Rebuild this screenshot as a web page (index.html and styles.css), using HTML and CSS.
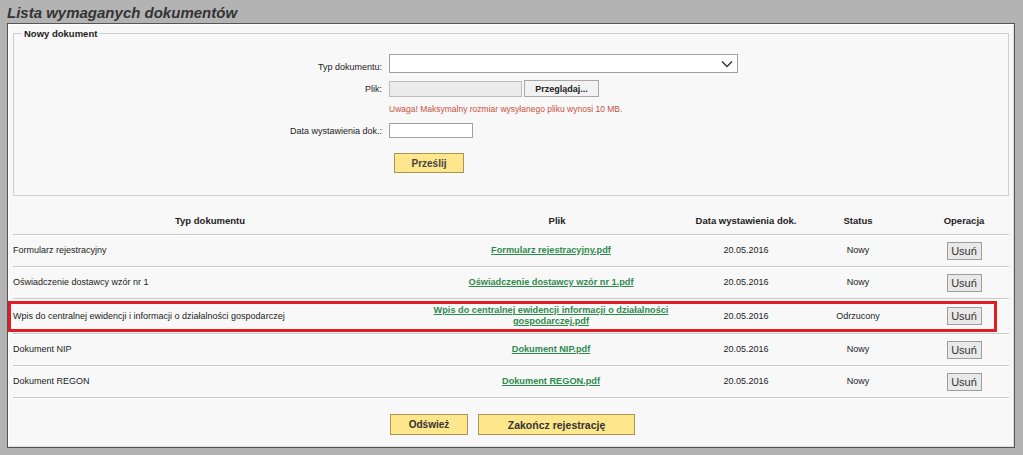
FILE: index.html
```html
<!DOCTYPE html>
<html lang="pl">
<head>
<meta charset="utf-8">
<title>Lista wymaganych dokumentów</title>
<link rel="stylesheet" href="styles.css">
</head>
<body>
<div class="page">
  <h1 class="title">Lista wymaganych dokumentów</h1>
  <div class="panel">
    <fieldset class="new-doc">
      <legend>Nowy dokument</legend>
      <div class="form-grid">
        <label class="lbl">Typ dokumentu:</label>
        <div class="select">
          <svg class="chev" width="12" height="8" viewBox="0 0 12 8"><path d="M1 1.5 L6 6.5 L11 1.5" fill="none" stroke="#333" stroke-width="1.4"/></svg>
        </div>

        <label class="lbl">Plik:</label>
        <div class="file">
          <span class="file-box"></span>
          <button class="btn-gray">Przeglądaj...</button>
        </div>

        <span></span>
        <div class="warn">Uwaga! Maksymalny rozmiar wysyłanego pliku wynosi 10 MB.</div>

        <label class="lbl">Data wystawienia dok.:</label>
        <div><span class="date-input"></span></div>

        <span></span>
        <div class="submit-row"><button class="btn-yellow btn-send">Prześlij</button></div>
      </div>
    </fieldset>

    <div class="docs">
      <div class="row head">
        <div class="c">Typ dokumentu</div>
        <div class="c">Plik</div>
        <div class="c">Data wystawienia dok.</div>
        <div class="c">Status</div>
        <div class="c">Operacja</div>
      </div>
      <div class="row">
        <div class="c name">Formularz rejestracyjny</div>
        <div class="c file-c"><a href="#">Formularz rejestracyjny.pdf</a></div>
        <div class="c">20.05.2016</div>
        <div class="c">Nowy</div>
        <div class="c"><button class="btn-del">Usuń</button></div>
      </div>
      <div class="row">
        <div class="c name">Oświadczenie dostawcy wzór nr 1</div>
        <div class="c file-c"><a href="#">Oświadczenie dostawcy wzór nr 1.pdf</a></div>
        <div class="c">20.05.2016</div>
        <div class="c">Nowy</div>
        <div class="c"><button class="btn-del">Usuń</button></div>
      </div>
      <div class="row marked">
        <div class="c name">Wpis do centralnej ewidencji i informacji o działalności gospodarczej</div>
        <div class="c file-c wrap"><a href="#">Wpis do centralnej ewidencji informacji o działalności gospodarczej.pdf</a></div>
        <div class="c">20.05.2016</div>
        <div class="c">Odrzucony</div>
        <div class="c"><button class="btn-del">Usuń</button></div>
      </div>
      <div class="row">
        <div class="c name">Dokument NIP</div>
        <div class="c file-c"><a href="#">Dokument NIP.pdf</a></div>
        <div class="c">20.05.2016</div>
        <div class="c">Nowy</div>
        <div class="c"><button class="btn-del">Usuń</button></div>
      </div>
      <div class="row">
        <div class="c name">Dokument REGON</div>
        <div class="c file-c"><a href="#">Dokument REGON.pdf</a></div>
        <div class="c">20.05.2016</div>
        <div class="c">Nowy</div>
        <div class="c"><button class="btn-del">Usuń</button></div>
      </div>
    </div>

    <div class="actions">
      <button class="btn-yellow btn-refresh">Odśwież</button>
      <button class="btn-yellow btn-finish">Zakończ rejestrację</button>
    </div>
  </div>
</div>
</body>
</html>
```
FILE: styles.css
```css
* { box-sizing: border-box; }

html, body {
  margin: 0;
  padding: 0;
  background: #b3b3b3;
  font-family: "Liberation Sans", Arial, sans-serif;
  font-size: 9px;
  color: #222;
}

.page {
  padding: 4px 8px 7px 7px;
}

.title {
  margin: 0 0 1px 0;
  font-size: 15px;
  line-height: 18px;
  font-weight: bold;
  font-style: italic;
  color: #333;
}

.panel {
  background: #f8f8f8;
  border: 1px solid #555;
  box-shadow: inset 1px 1px 0 #fff, inset -1px -1px 0 #ddd;
  height: 425px;
  padding: 4px 5px 0 5px;
}

.new-doc {
  margin: 0;
  border: 1px solid #cfcfcf;
  padding: 0 8px 0 8px;
  height: 168px;
}

.new-doc legend {
  padding: 0 2px;
  font-weight: bold;
  font-size: 9.5px;
  line-height: 11px;
  color: #222;
}

.form-grid {
  display: grid;
  grid-template-columns: 360px 1fr;
  column-gap: 7px;
  padding-top: 15px;
  align-items: center;
}

.lbl {
  text-align: right;
  color: #222;
}

.select {
  width: 349px;
  height: 19px;
  background: #fff;
  border: 1px solid #a0a0a0;
  display: flex;
  align-items: center;
  justify-content: flex-end;
  padding-right: 4px;
  margin-bottom: 7px;
}

.file {
  display: flex;
  align-items: center;
  gap: 2px;
  height: 17px;
}

.file-box {
  width: 133px;
  height: 16px;
  background: #ececec;
  border: 1px solid #bdbdbd;
}

.btn-gray {
  font-family: inherit;
  width: 75px;
  height: 17px;
  padding: 0;
  background: #f2f2f2;
  border: 1px solid #a8a8a8;
  font-size: 9px;
  font-weight: bold;
  color: #222;
}

.warn {
  color: #c9503d;
  font-size: 8.5px;
  line-height: 11px;
  padding: 7px 0 8px 0;
}

.date-input {
  display: block;
  width: 84px;
  height: 15px;
  background: #fff;
  border: 1px solid #a0a0a0;
}

.submit-row {
  padding: 15px 0 0 5px;
}

.btn-yellow {
  font-family: inherit;
  background: #fde68c;
  border: 1px solid #a8974e;
  color: #333;
  padding: 0;
}

.btn-send {
  width: 70px;
  height: 20px;
  font-size: 10px;
  font-weight: bold;
  color: #444;
}

.docs {
  margin-top: 10px;
}

.row {
  display: grid;
  grid-template-columns: 394px 300px 78px 146px 66px 11px;
  height: 32px;
  border-bottom: 1px solid #c8c8c8;
  box-shadow: 0 1px 0 #fff;
  align-items: center;
  position: relative;
}

.row.head {
  height: 29px;
  font-weight: bold;
  font-size: 9.5px;
  align-items: end;
  padding-bottom: 8px;
}

.c {
  display: flex;
  justify-content: center;
  white-space: nowrap;
  line-height: 11px;
}

.c.name {
  justify-content: flex-start;
}

.c.file-c {
  padding-right: 12px;
}

.c.wrap {
  white-space: normal;
  text-align: center;
  padding: 0 30px 0 18px;
}

.row a {
  color: #2f8a4e;
  font-weight: bold;
  font-size: 9.2px;
}

.row.marked {
  height: 35px;
}

.row.marked::after {
  content: "";
  position: absolute;
  left: -5px;
  right: 12px;
  top: 2px;
  bottom: 1px;
  border: 3px solid #e01c25;
  pointer-events: none;
}

.btn-del {
  font-family: inherit;
  width: 35px;
  height: 18px;
  padding: 0;
  background: #e9e9e9;
  border: 1px solid #9d9d9d;
  font-size: 11px;
  color: #333;
}

.actions {
  display: flex;
  justify-content: flex-start;
  gap: 10px;
  padding: 16px 0 0 377px;
}

.btn-refresh {
  width: 78px;
  height: 21px;
  font-size: 10px;
  font-weight: bold;
}

.btn-finish {
  width: 157px;
  height: 21px;
  font-size: 10.5px;
  font-weight: bold;
}
```
